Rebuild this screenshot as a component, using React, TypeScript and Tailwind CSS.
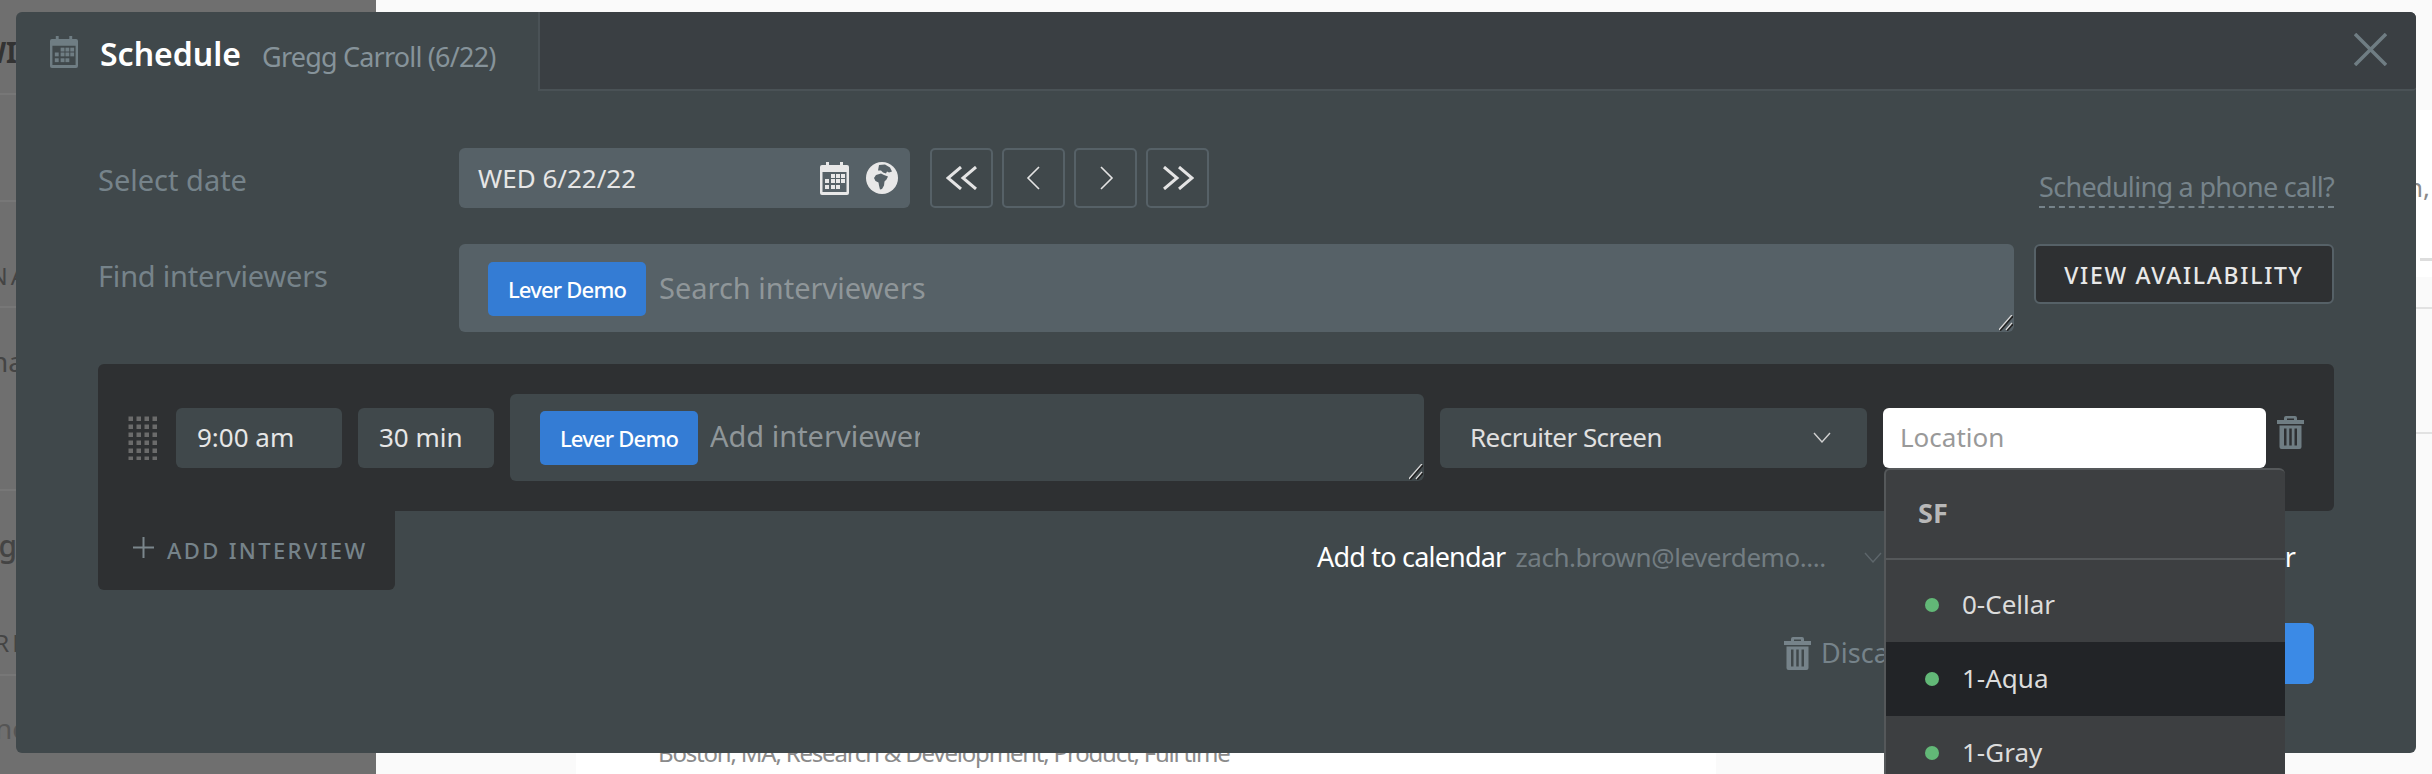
import React from 'react';

const CalendarIcon = ({ className }: { className: string }) => (
  <svg viewBox="0 0 29 33" className={className} fill="currentColor">
    <path fillRule="evenodd" d="M6 0h3v3h11V0h3v3h4a2 2 0 0 1 2 2v26a2 2 0 0 1-2 2H2a2 2 0 0 1-2-2V5a2 2 0 0 1 2-2h4V0zM2.500 10v20h24V10h-24z" />
    {[[11, 12], [16, 12], [21, 12], [5, 17], [11, 17], [16, 17], [21, 17], [5, 23], [11, 23], [16, 23]].map(([x, y]) => (
      <rect key={`${x}-${y}`} x={x} y={y} width="4" height="4" />
    ))}
  </svg>
);

const GlobeIcon = () => (
  <svg viewBox="0 0 32 32" className="w-[32px] h-[32px]">
    <circle cx="16" cy="16" r="16" fill="#e8e8e8" />
    <path fill="#566167" d="M13 3l6-.5 5 3 2 4-3 1-2-1-1 2-3-1-2-2-3 0z" />
    <path fill="#566167" d="M10 13l5-1.500 3 1.500 4 1.500-1.500 3-2 2-.5 4-2 3.500-2 .5-1-4-.5-3-3-1.500-1.500-3z" />
  </svg>
);

const TrashIcon = ({ className }: { className: string }) => (
  <svg viewBox="0 0 27 33" className={className} fill="currentColor">
    <path d="M9 0h9a2 2 0 0 1 2 2v2h7v4H0V4h7V2a2 2 0 0 1 2-2zm1 2.500V4h7V2.500h-7z" fillRule="evenodd" />
    <path
      fillRule="evenodd"
      d="M2.500 9.500h22V31a2 2 0 0 1-2 2h-18a2 2 0 0 1-2-2V9.500zM7 12.500v17h2.500v-17H7zm5.250 0v17h2.500v-17h-2.500zm5.250 0v17H20v-17h-2.500z"
    />
  </svg>
);

const Chevron = ({ className }: { className: string }) => (
  <svg viewBox="0 0 18 11" className={className} fill="none" stroke="currentColor" strokeWidth="1.400">
    <path d="M1 1l8 9 8-9" />
  </svg>
);

const GripIcon = () => (
  <svg viewBox="0 0 29 44" className="w-[29px] h-[44px] shrink-0" fill="#6b6b6b">
    {[0, 1, 2, 3, 4, 5].map((r) =>
      [0, 1, 2, 3].map((c) => <rect key={`${r}-${c}`} x={c * 8 + 0.5} y={r * 8 + 0.5} width="4.500" height="4.500" />)
    )}
  </svg>
);

const ResizeHandle = () => (
  <svg viewBox="0 0 14 16" className="absolute right-[1px] bottom-[1px] w-[14px] h-[16px]" fill="none" strokeWidth="1.500">
    <path d="M0 15L13 0" stroke="#d8d8d8" />
    <path d="M1 16L14 1" stroke="#222" />
    <path d="M7 15L13 8" stroke="#d8d8d8" />
    <path d="M8 16L14 9" stroke="#222" />
  </svg>
);

const NavButton = ({ path, width }: { path: string; width: number }) => (
  <button className="w-[63px] h-[60px] flex items-center justify-center rounded-[5px] border-2 border-[#566167]">
    <svg viewBox="0 0 32 24" className="w-[32px] h-[24px]" fill="none" stroke="#e4e4e4" strokeWidth={width}>
      <path d={path} />
    </svg>
  </button>
);

const Chip = () => (
  <span className="w-[158px] h-[54px] shrink-0 flex items-center justify-center rounded-[5px] bg-[#347cd4] text-white text-[22px] font-medium tracking-[-0.8px]">
    Lever Demo
  </span>
);

const locations = ['0-Cellar', '1-Aqua', '1-Gray'];

const sideRows = [
  { h: 'h-[95px]', w: 'w-[17px]', text: 'WI', cls: 'font-bold text-[28px] text-[#333] pt-[31px]', line: true },
  { h: 'h-[107px]', w: 'w-[16px]', text: '', cls: '', line: true },
  { h: 'h-[106px]', w: 'w-[29px]', text: 'NA', cls: 'text-[24px] tracking-[3px] text-[#444] pt-[56px]', line: true },
  { h: 'h-[183px]', w: 'w-[24px]', text: 'na', cls: 'text-[28px] text-[#444] pt-[32px]', line: true },
  { h: 'h-[110px]', w: 'w-[17px]', text: 'ng', cls: 'font-medium text-[30px] text-[#444] pt-[32px]', line: false },
  { h: 'h-[75px]', w: 'w-[30px]', text: 'RK', cls: 'text-[24px] tracking-[3px] text-[#444] pt-[24px]', line: true },
  { h: 'h-[98px]', w: 'w-[28px]', text: 'ne', cls: 'text-[28px] text-[#555] pt-[31px]', line: false },
];

export default function App() {
  return (
    <div className="relative w-[2432px] h-[774px] overflow-hidden flex font-['Noto_Sans',sans-serif] bg-[#fafafa]">
      {/* page behind the modal */}
      <div className="w-[376px] shrink-0 bg-[#6f6f6f]">
        {sideRows.map((row, i) => (
          <div key={i} className={`${row.h} overflow-hidden ${row.line ? 'border-b-2 border-[#777]' : ''}`}>
            <div className={`${row.w} flex justify-end overflow-hidden whitespace-nowrap ${row.cls}`}>
              <span className="shrink-0">{row.text}</span>
            </div>
          </div>
        ))}
      </div>
      <div className="flex-1 flex flex-col">
        <div className="h-[110px]" />
        <div className="h-[167px] bg-white flex flex-col items-end">
          <span className="mt-[58px] pr-[2px] text-[26px] text-[#8a8a8a]">Boston,</span>
          <div className="mt-[51px] w-[12px] h-[3px] bg-[#ddd]" />
        </div>
        <div className="flex-1 flex">
          <div className="w-[200px]" />
          <div className="w-[1140px] bg-white flex flex-col justify-end pl-[82px] pb-[3px] text-[24px] tracking-[-1.2px] text-[#8a8a8a] whitespace-nowrap">
            Boston, MA, Research &amp; Development, Product, Full time
          </div>
          <div className="flex-1 pt-[30px]">
            <div className="h-[2px] bg-[#e2e2e2]" />
            <div className="mt-[123px] h-[2px] bg-[#e2e2e2]" />
          </div>
        </div>
      </div>

      {/* modal */}
      <div className="absolute left-[16px] top-[12px] w-[2400px] h-[741px] rounded-[6px] bg-[#40484b] flex flex-col">
        <div className="h-[79px] flex shrink-0">
          <div className="w-[522px] flex items-center pl-[34px]">
            <CalendarIcon className="w-[28px] h-[32px] text-[#6f7d83]" />
            <h1 className="ml-[22px] mt-[5px] text-[32px] font-semibold text-white">Schedule</h1>
            <span className="ml-[21px] mt-[11px] text-[27px] tracking-[-0.8px] text-[#86939a]">Gregg Carroll (6/22)</span>
          </div>
          <div className="flex-1 bg-[#3a3f43] border-l-2 border-b-2 border-[#4a5256] rounded-tr-[6px] rounded-br-[4px] flex justify-end items-start pt-[21px] pr-[29px]">
            <svg viewBox="0 0 33 33" className="w-[33px] h-[33px]" fill="none" stroke="#6f7d83" strokeWidth="3.500">
              <path d="M1 1l31 31M32 1L1 32" />
            </svg>
          </div>
        </div>

        <div className="px-[82px] flex-1 flex flex-col">
          <div className="mt-[57px] flex items-start">
            <label className="w-[361px] shrink-0 pt-[10px] text-[29px] text-[#76838a]">Select date</label>
            <div className="w-[451px] h-[60px] rounded-[6px] bg-[#566167] flex items-center pl-[19px] pr-[12px]">
              <span className="text-[26px] text-[#e6e6e6]">WED 6/22/22</span>
              <CalendarIcon className="ml-auto w-[29px] h-[33px] text-[#e8e8e8]" />
              <span className="ml-[17px]"><GlobeIcon /></span>
            </div>
            <div className="ml-[20px] flex gap-[9px]">
              <NavButton width={3} path="M15 1L2 12l13 11M30 1L17 12l13 11" />
              <NavButton width={1.6} path="M21 1L10 12l11 11" />
              <NavButton width={1.6} path="M11 1l11 11-11 11" />
              <NavButton width={3} path="M2 1l13 11L2 23M17 1l13 11-13 11" />
            </div>
            <a className="ml-auto mt-[20px] border-b-2 border-dashed border-[#76838a] text-[27px] leading-[38px] tracking-[-0.7px] text-[#76838a]">
              Scheduling a phone call?
            </a>
          </div>

          <div className="mt-[36px] flex items-start">
            <label className="w-[361px] shrink-0 pt-[10px] text-[29px] tracking-[-0.2px] text-[#76838a]">Find interviewers</label>
            <div className="relative flex-1 h-[88px] rounded-[6px] bg-[#566167] flex items-start pl-[29px] pt-[18px]">
              <Chip />
              <span className="ml-[13px] mt-[4px] text-[29px] text-[#8f9699]">Search interviewers</span>
              <ResizeHandle />
            </div>
            <button className="ml-[20px] w-[300px] h-[60px] pt-[2px] rounded-[6px] border-2 border-[#566167] bg-[#2e3032] text-[23px] font-medium tracking-[1.700px] text-[#e8e8e8]">
              VIEW AVAILABILITY
            </button>
          </div>

          <div className="mt-[32px] h-[147px] rounded-t-[6px] rounded-br-[6px] bg-[#2e3032] flex items-center pl-[30px]">
            <GripIcon />
            <div className="ml-[19px] w-[166px] h-[60px] rounded-[6px] bg-[#40484b] flex items-center pl-[21px] text-[26px] text-[#e6e6e6]">9:00 am</div>
            <div className="ml-[16px] w-[136px] h-[60px] rounded-[6px] bg-[#40484b] flex items-center pl-[21px] text-[26px] text-[#e6e6e6]">30 min</div>
            <div className="relative ml-[16px] w-[914px] h-[87px] rounded-[6px] bg-[#40484b] flex items-start pl-[30px] pt-[17px]">
              <Chip />
              <span className="ml-[12px] mt-[3px] w-[210px] overflow-hidden whitespace-nowrap text-[29px] text-[#8f9699]">Add interviewer</span>
              <ResizeHandle />
            </div>
            <div className="ml-[16px] w-[427px] h-[60px] rounded-[6px] bg-[#40484b] flex items-center pl-[30px] pr-[36px] text-[26px] tracking-[-0.55px] text-[#e0e0e0]">
              Recruiter Screen
              <Chevron className="ml-auto w-[18px] h-[11px] text-[#d0d0d0]" />
            </div>
            <div className="relative ml-[16px] w-[383px] h-[60px]">
              <div className="h-full rounded-[6px] bg-white flex items-center pl-[17px] text-[26px] text-[#999]">Location</div>
              <div className="absolute z-10 left-[1px] top-[60px] w-[401px] h-[320px] rounded-t-[6px] bg-[#3d3f41] border-l-2 border-t-2 border-[#55585a]">
                <div className="h-[90px] border-b-2 border-[#55585a] flex items-center pl-[32px] text-[27px] font-bold text-[#b8b8b8]">SF</div>
                <div className="pt-[8px]">
                  {locations.map((name) => (
                    <div key={name} className={`h-[74px] flex items-center pl-[39px] ${name === '1-Aqua' ? 'bg-[#222427]' : ''}`}>
                      <span className="w-[14px] h-[14px] rounded-full bg-[#62b877]" />
                      <span className="ml-[23px] text-[26px] text-[#dcdcdc]">{name}</span>
                    </div>
                  ))}
                </div>
              </div>
            </div>
            <TrashIcon className="ml-[11px] mb-[10px] w-[27px] h-[33px] text-[#6f7d83]" />
          </div>

          <div className="flex">
            <div className="w-[297px] h-[79px] shrink-0 rounded-b-[6px] bg-[#2e3032] flex items-center pl-[35px]">
              <svg viewBox="0 0 21 21" className="w-[21px] h-[21px] mb-[6px]" stroke="#7b868c" strokeWidth="2">
                <path d="M10.500 0v21M0 10.500h21" />
              </svg>
              <span className="ml-[13px] text-[22px] font-medium tracking-[2.350px] text-[#76838a]">ADD INTERVIEW</span>
            </div>
            <div className="flex-1 flex flex-col">
              <div className="mt-[26px] flex items-center pl-[922px] pr-[39px] text-[27px] tracking-[-0.8px]">
                <span className="text-white">Add to calendar</span>
                <span className="ml-[10px] w-[312px] whitespace-nowrap text-[26px] tracking-[-0.45px] text-[#737d82]">zach.brown@leverdemo....</span>
                <Chevron className="ml-[37px] w-[18px] h-[11px] text-[#5d666b]" />
                <span className="ml-auto text-white">Show calendar</span>
              </div>
              <div className="mt-[45px] flex items-center justify-end pr-[20px]">
                <TrashIcon className="w-[27px] h-[33px] text-[#76838a]" />
                <span className="ml-[10px] text-[27px] text-[#76838a]">Discard</span>
                <button className="ml-[84px] w-[314px] h-[61px] rounded-[6px] bg-[#3b8ae6] text-[24px] font-medium text-white">SCHEDULE</button>
              </div>
            </div>
          </div>
        </div>
      </div>
    </div>
  );
}
